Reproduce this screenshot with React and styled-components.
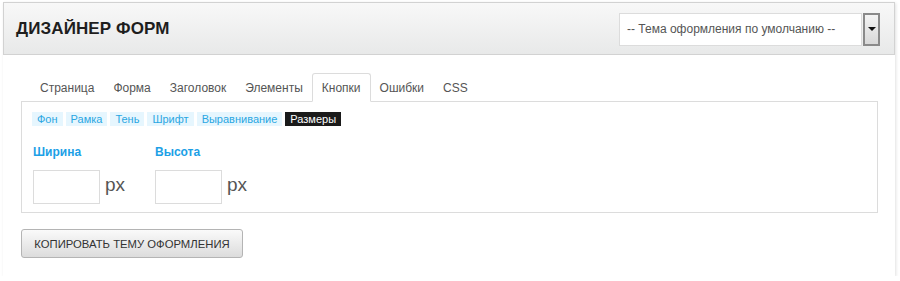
import React from "react";
import styled, { createGlobalStyle } from "styled-components";

const Global = createGlobalStyle`
  html, body { margin: 0; padding: 0; background: #fff; }
  body { font-family: "Liberation Sans", Arial, sans-serif; }
  * { box-sizing: border-box; }
`;

const Panel = styled.div`
  margin: 2px 0 0 3px;
  width: 892px;
  background: #fff;
  box-shadow: 1px 1px 3px rgba(0,0,0,0.12);
  padding-bottom: 18px;
`;

const Header = styled.div`
  height: 53px;
  border: 1px solid #d2d2d2;
  background: linear-gradient(#f8f8f8, #e8e9e9);
  display: flex;
  align-items: center;
  justify-content: space-between;
  padding: 0 14px 0 12px;
`;

const Title = styled.h1`
  margin: 0;
  font-size: 17px;
  font-weight: bold;
  color: #1e1e1e;
  letter-spacing: 0.1px;
`;

const Select = styled.div`
  display: flex;
  height: 33px;
  margin-top: 1px;
`;

const SelectField = styled.div`
  width: 243px;
  border: 1px solid #dcdcdc;
  background: #fff;
  font-size: 12px;
  color: #555;
  display: flex;
  align-items: center;
  padding-left: 7px;
`;

const SelectButton = styled.div`
  width: 17px;
  margin-left: 1px;
  border: 2px solid #8a8a8a;
  background: linear-gradient(#f4f4f4, #d8d8d8);
  display: flex;
  align-items: center;
  justify-content: center;
`;

const Arrow = styled.div`
  width: 0;
  height: 0;
  border-left: 4px solid transparent;
  border-right: 4px solid transparent;
  border-top: 4px solid #111;
`;

const Body = styled.div`
  padding: 18px 17px 0 18px;
`;

const Tabs = styled.div`
  display: flex;
  padding-left: 9px;
  height: 28px;
  position: relative;
  z-index: 1;
`;

const Tab = styled.div`
  height: ${(p) => (p.$active ? "29px" : "28px")};
  padding: 1px 9px 0;
  font-size: 12px;
  color: #555;
  display: flex;
  align-items: center;
  border: 1px solid ${(p) => (p.$active ? "#dcdcdc" : "transparent")};
  border-bottom-color: ${(p) => (p.$active ? "#fff" : "transparent")};
  border-radius: 3px 3px 0 0;
  background: ${(p) => (p.$active ? "#fff" : "transparent")};
  margin-right: -1px;
`;

const Box = styled.div`
  border: 1px solid #dcdcdc;
  padding: 10px 10px 8px 10px;
`;

const SubTabs = styled.div`
  display: flex;
  gap: 3px;
`;

const SubTab = styled.div`
  height: 14px;
  padding: 0 5px;
  font-size: 11px;
  line-height: 14px;
  color: ${(p) => (p.$active ? "#fff" : "#2aa6e2")};
  background: ${(p) => (p.$active ? "#1a1a1a" : "#e6f6fe")};
`;

const Fields = styled.div`
  display: flex;
  margin-top: 19px;
  padding-left: 1px;
`;

const Field = styled.div`
  width: 122px;
  display: flex;
  flex-direction: column;
`;

const Label = styled.div`
  font-size: 12px;
  font-weight: bold;
  color: #1ca0e6;
  line-height: 14px;
`;

const InputRow = styled.div`
  display: flex;
  align-items: center;
  margin-top: 11px;
`;

const Input = styled.div`
  width: 67px;
  height: 34px;
  border: 1px solid #dcdcdc;
  background: #fff;
`;

const Unit = styled.span`
  font-size: 19px;
  color: #555;
  margin-left: 5px;
  margin-top: -4px;
`;

const Button = styled.button`
  margin-top: 16px;
  height: 29px;
  width: 222px;
  border: 1px solid #b4b4b4;
  border-radius: 3px;
  background: linear-gradient(#fafafa, #dcdcdc);
  font-family: "Liberation Sans", Arial, sans-serif;
  font-size: 11.3px;
  color: #333;
  text-transform: uppercase;
  padding: 0;
  display: block;
`;

const tabs = ["Страница", "Форма", "Заголовок", "Элементы", "Кнопки", "Ошибки", "CSS"];
const subs = ["Фон", "Рамка", "Тень", "Шрифт", "Выравнивание", "Размеры"];

export default function App() {
  return (
    <>
      <Global />
      <Panel>
        <Header>
          <Title>ДИЗАЙНЕР ФОРМ</Title>
          <Select>
            <SelectField>-- Тема оформления по умолчанию --</SelectField>
            <SelectButton>
              <Arrow />
            </SelectButton>
          </Select>
        </Header>
        <Body>
          <Tabs>
            {tabs.map((t) => (
              <Tab key={t} $active={t === "Кнопки"}>{t}</Tab>
            ))}
          </Tabs>
          <Box>
            <SubTabs>
              {subs.map((s) => (
                <SubTab key={s} $active={s === "Размеры"}>{s}</SubTab>
              ))}
            </SubTabs>
            <Fields>
              {["Ширина", "Высота"].map((l) => (
                <Field key={l}>
                  <Label>{l}</Label>
                  <InputRow>
                    <Input />
                    <Unit>px</Unit>
                  </InputRow>
                </Field>
              ))}
            </Fields>
          </Box>
          <Button>Копировать тему оформления</Button>
        </Body>
      </Panel>
    </>
  );
}
